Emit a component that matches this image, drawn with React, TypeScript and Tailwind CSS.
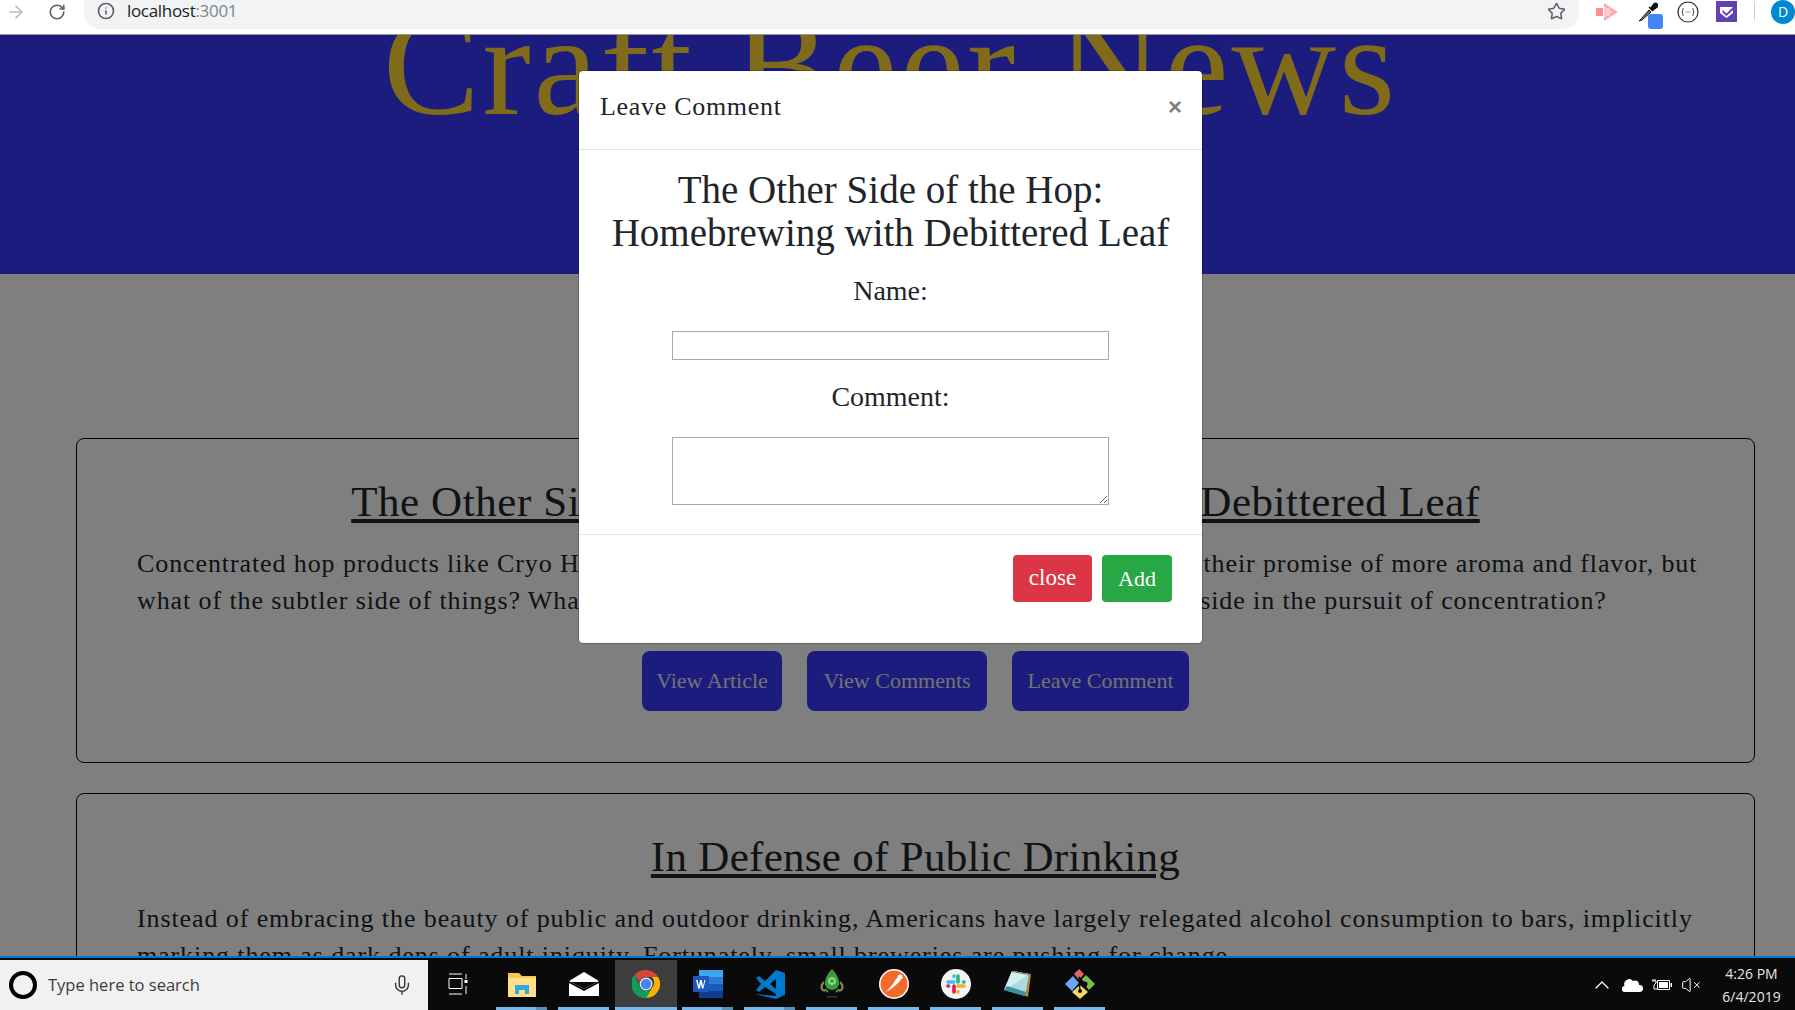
import { ArrowRight, RotateCw, Info, Star, Mic, ChevronUp, VolumeX } from "lucide-react";

const underlineCells = [
  { key: "explorer", icon: <Explorer />, split: true },
  { key: "mail", icon: <MailIcon />, split: false },
  { key: "chrome", icon: <ChromeIcon />, split: false, active: true },
  { key: "word", icon: <WordIcon />, split: true },
  { key: "vscode", icon: <VsCodeIcon />, split: true },
  { key: "rocket", icon: <RocketIcon />, split: false },
  { key: "postman", icon: <PostmanIcon />, split: false },
  { key: "slack", icon: <SlackIcon />, split: false },
  { key: "notepad", icon: <NotepadIcon />, split: false },
  { key: "kraken", icon: <DiamondIcon />, split: false },
];

function Explorer() {
  return (
    <svg width="28" height="26" viewBox="0 0 28 26">
      <path d="M0 2h11l3 3h14v21H0z" fill="#f5c94f" />
      <rect x="0" y="7" width="28" height="19" fill="#ffe08a" />
      <path d="M7 14h14v9h-4v-4h-6v4H7z" fill="#2fa9e0" />
    </svg>
  );
}

function MailIcon() {
  return (
    <svg width="30" height="24" viewBox="0 0 30 24">
      <path d="M0 9 15 0l15 9-15 8z" fill="#fff" />
      <path d="M0 11v13h30V11L15 19z" fill="#fff" />
      <path d="M2 10h26l-13 7z" fill="#0a0a0a" />
    </svg>
  );
}

function ChromeIcon() {
  return (
    <svg width="28" height="28" viewBox="0 0 48 48">
      <path d="M24 0a24 24 0 0 1 20.8 12H24a12 12 0 0 0-11.3 8L5 7.700A24 24 0 0 1 24 0z" fill="#db4437" />
      <path d="M44.800 12A24 24 0 0 1 24 48l10.400-18a12 12 0 0 0-.6-18z" fill="#f4b400" />
      <path d="M5 7.700 13.600 30a12 12 0 0 0 20.800 0L24 48A24 24 0 0 1 5 7.700z" fill="#0f9d58" />
      <circle cx="24" cy="24" r="11" fill="#f1f3f4" />
      <circle cx="24" cy="24" r="9" fill="#4285f4" />
    </svg>
  );
}

function WordIcon() {
  return (
    <svg width="30" height="28" viewBox="0 0 30 28">
      <rect x="6" y="0" width="24" height="7" fill="#41a5ee" />
      <rect x="6" y="7" width="24" height="7" fill="#2b7cd3" />
      <rect x="6" y="14" width="24" height="7" fill="#185abd" />
      <rect x="6" y="21" width="24" height="7" fill="#103f91" />
      <rect x="0" y="6" width="16" height="16" rx="1" fill="#185abd" />
      <path d="M3 10h1.600l1.200 6 1.400-6h1.500l1.400 6 1.200-6H12.400l-2 8.500H8.900L7.900 13.500l-1 5H5.200z" fill="#fff" />
    </svg>
  );
}

function VsCodeIcon() {
  return (
    <svg width="30" height="30" viewBox="0 0 30 30">
      <path d="M21 1 10 12 4 7 1 9 6 15 1 21 4 23 10 18 21 25zM21 10l-6 5 6 5z" fill="#0179cb" fillRule="evenodd" />
      <path d="M21 1l9 3v22l-9 4z" fill="#0179cb" />
      <path d="M0 25l21 2v3z" fill="#0179cb" />
    </svg>
  );
}

function RocketIcon() {
  return (
    <svg width="24" height="30" viewBox="0 0 24 30">
      <path d="M12 0c4 4 7 9 7 14 0 4-3 7-7 7s-7-3-7-7c0-5 3-10 7-14z" fill="#3d9b3d" />
      <circle cx="12" cy="12" r="4" fill="#8fd08f" />
      <circle cx="12" cy="12" r="1.800" fill="#3d9b3d" />
      <path d="M4 13c-4 4-3 8 1 9M20 13c4 4 3 8-1 9" stroke="#8a8d63" strokeWidth="2" fill="none" />
      <path d="M5 20l3 3M19 20l-3 3" stroke="#3d9b3d" strokeWidth="2" />
      <rect x="7" y="27" width="10" height="1.500" fill="#333" />
    </svg>
  );
}

function PostmanIcon() {
  return (
    <svg width="30" height="30" viewBox="0 0 30 30">
      <circle cx="15" cy="15" r="15" fill="#fff" />
      <circle cx="15" cy="15" r="13.500" fill="#f36b2a" />
      <path d="M7 23l7-8 3-5 3-2 2 1-1 3-3 3-6 5z" fill="#fff" />
      <circle cx="21" cy="8" r="2.500" fill="#fff" />
    </svg>
  );
}

function SlackIcon() {
  return (
    <svg width="30" height="30" viewBox="0 0 30 30">
      <circle cx="15" cy="15" r="15" fill="#f4f4f4" />
      <g strokeWidth="3.600" strokeLinecap="round">
        <path d="M7 13h6M13 7v0.500" stroke="#36c5f0" />
        <path d="M17 7v6M23 13h-0.500" stroke="#2eb67d" />
        <path d="M23 17h-6M17 23v-0.500" stroke="#ecb22e" />
        <path d="M13 23v-6M7 17h0.500" stroke="#e01e5a" />
      </g>
    </svg>
  );
}

function NotepadIcon() {
  return (
    <svg width="28" height="28" viewBox="0 0 28 28">
      <path d="M9 1 27 4 24 27 20 25z" fill="#b08a3c" />
      <path d="M8 1 25 4 21 26 0 20z" fill="#a9dbe0" />
      <path d="M8 1 25 4 14 12 0 20z" fill="#d4eef0" />
      <path d="M0 20 21 26 22 22 3 16z" fill="#3c8f9c" />
      <path d="M8 1 25 4 25 5 8 2z" fill="#666" />
    </svg>
  );
}

function DiamondIcon() {
  return (
    <svg width="30" height="30" viewBox="0 0 30 30">
      <path d="M9 5 14 0l5 5-5 6z" fill="#e2646a" />
      <path d="M0 15l8-8 6 7-7 8z" fill="#6aa7f5" />
      <path d="M16 11l5-5 9 9-6 6z" fill="#7fbb50" />
      <path d="M7 23l8-7 8 7-8 7z" fill="#f3d669" />
      <circle cx="20" cy="15" r="2.500" fill="#0a0a0a" />
      <circle cx="15" cy="22" r="2" fill="#0a0a0a" />
      <path d="M14 8l1 14M14 8l6 7" stroke="#0a0a0a" strokeWidth="1.300" />
    </svg>
  );
}

function ArticleCard(props: { title: string; titleClass: string; lines: string[]; buttons?: boolean }) {
  return (
    <div className="rounded-lg border border-black pt-[39px] pb-[51px] px-[60px]">
      <h2 className={`${props.titleClass} text-center text-[43px] leading-[48px] text-[#212529] underline whitespace-nowrap`}>
        {props.title}
      </h2>
      <div className="mt-[19px] text-[26px] leading-[37px] text-[#212529] tracking-[0.9px]">
        {props.lines.map((line) => (
          <p key={line} className="whitespace-nowrap">{line}</p>
        ))}
      </div>
      {props.buttons && (
        <div className="mt-[32px] flex justify-center gap-[25px]">
          <PageButton width="w-[140px]">View Article</PageButton>
          <PageButton width="w-[180px]">View Comments</PageButton>
          <PageButton width="w-[177px]">Leave Comment</PageButton>
        </div>
      )}
    </div>
  );
}

function PageButton(props: { children: string; width: string }) {
  return (
    <button className={`${props.width} h-[60px] pb-[2px] rounded-lg bg-[#3639fb] text-[22px] text-[#e4e4e4]`}>
      {props.children}
    </button>
  );
}

export default function App() {
  return (
    <div className="h-[1010px] w-[1795px] flex flex-col overflow-hidden bg-white font-['Liberation_Serif',serif]">
      {/* browser bar */}
      <div className="h-[35px] shrink-0 flex items-start border-b border-[#9a9a9a] bg-white font-['Open_Sans',sans-serif]">
        <div className="w-[84px] h-[24px] flex items-center">
          <ArrowRight size={20} className="ml-[6px] text-[#bdbdbd]" strokeWidth={2} />
          <RotateCw size={18} className="ml-[22px] text-[#5f6368]" strokeWidth={2.2} />
        </div>
        <div className="w-[1497px] h-[29px] bg-[#f1f3f4] rounded-br-[16px] rounded-bl-[16px] flex items-center justify-between pl-[13px] pr-[13px]">
          <div className="flex items-center -mt-[7px]">
            <Info size={18} className="text-[#5f6368]" strokeWidth={2.2} />
            <span className="ml-[12px] text-[17px] tracking-[-0.3px] text-[#202124]">
              localhost<span className="text-[#80868b]">:3001</span>
            </span>
          </div>
          <Star size={19} className="-mt-[6px] text-[#5f6368]" strokeWidth={2} />
        </div>
        <div className="flex-1 h-[34px] flex items-start relative">
          {/* extensions */}
          <svg width="22" height="18" viewBox="0 0 22 18" className="ml-[17px] mt-[3px]">
            <path d="M0 5h7v8H0z" fill="#ff8f94" />
            <path d="M8 0l14 9-14 9v-4l7-5-7-5z" fill="#ffaaae" />
            <path d="M8 5h5l3 4-3 4H8z" fill="#ffc9cb" />
          </svg>
          <div className="relative ml-[20px] mt-[2px] w-[28px] h-[30px]">
            <svg width="20" height="20" viewBox="0 0 20 20">
              <path d="M1 19 3 17 11 8 13 10 4 18z" fill="#3b8a5b" stroke="#222" strokeWidth="1" />
              <path d="M11 5 15 9M13 6l3-4a2 2 0 0 1 3 3l-4 3z" fill="#111" stroke="#111" strokeWidth="1.500" />
            </svg>
            <div className="absolute left-[10px] top-[12px] w-[15px] h-[15px] rounded-[3px] bg-[#4285f4]" />
          </div>
          <svg width="22" height="22" viewBox="0 0 22 22" className="ml-[11px] mt-[1px]">
            <circle cx="11" cy="11" r="10" fill="none" stroke="#333" strokeWidth="1.200" />
            <path d="M6.500 7c-1 0 0 3-1.500 4 1.500 1 .5 4 1.500 4M15.500 7c1 0 0 3 1.500 4-1.500 1-.5 4-1.500 4" stroke="#333" fill="none" />
            <circle cx="9" cy="11" r=".6" fill="#333" />
            <circle cx="11" cy="11" r=".6" fill="#333" />
            <circle cx="13" cy="11" r=".6" fill="#333" />
          </svg>
          <svg width="21" height="21" viewBox="0 0 21 21" className="ml-[17px] mt-[1px]">
            <rect width="21" height="21" fill="#6a3fb5" />
            <rect x="10" width="11" height="21" fill="#5b43ad" />
            <path d="M4 6h13v6l-6.500 5L4 12z" fill="#fff" />
            <path d="M6.500 9l4 3.500L17 6v3l-6.500 6-4-3.500z" fill="#6a3fb5" />
          </svg>
          <div className="ml-[17px] mt-[1px] w-[1px] h-[20px] bg-[#cfcfcf]" />
          <div className="ml-[16px] w-[24px] h-[24px] shrink-0 rounded-full bg-[#0288d1] text-white text-[14px] leading-[24px] text-center">
            D
          </div>
        </div>
      </div>

      {/* page */}
      <div className="relative flex-1 overflow-hidden">
        <header className="h-[239px] bg-[#3639fb] overflow-hidden">
          <h1 className="-mt-[45px] text-center text-[145px] leading-[150px] text-[#fed634] pr-[14px] whitespace-nowrap tracking-[2.7px]">
            Craft Beer News
          </h1>
        </header>
        <main className="mt-[164px] ml-[76px] mr-[40px] flex flex-col gap-[30px]">
          <ArticleCard
            title="The Other Side of the Hop: Homebrewing with Debittered Leaf"
            titleClass="tracking-[0.57px]"
            lines={[
              "Concentrated hop products like Cryo Hops and lupulin powder have wooed brewers over with their promise of more aroma and flavor, but",
              "what of the subtler side of things? What might be gained from the humble hop leaf often left aside in the pursuit of concentration?",
            ]}
            buttons
          />
          <ArticleCard
            title="In Defense of Public Drinking"
            titleClass="tracking-[0.3px]"
            lines={[
              "Instead of embracing the beauty of public and outdoor drinking, Americans have largely relegated alcohol consumption to bars, implicitly",
              "marking them as dark dens of adult iniquity. Fortunately, small breweries are pushing for change.",
            ]}
          />
        </main>

        {/* modal */}
        <div className="absolute inset-0 bg-black/50" />
        <div className="absolute left-[578px] top-[35px] w-[625px] rounded-[5px] bg-white border border-black/20 bg-clip-padding text-[#212529]">
          <div className="h-[79px] flex items-center justify-between pl-[21px] pr-[20px] pb-[7px] border-b border-[#dee2e6]">
            <span className="text-[26px] leading-[32px] tracking-[0.7px]">Leave Comment</span>
            <span className="text-[24px] leading-[32px] font-bold text-[#7f7f7f] font-['Liberation_Sans',sans-serif]">×</span>
          </div>
          <div className="flex flex-col items-center h-[385px] border-b border-[#dee2e6]">
            <h3 className="mt-[18px] text-center text-[39px] leading-[43px] whitespace-nowrap">
              The Other Side of the Hop:
              <br />
              Homebrewing with Debittered Leaf
            </h3>
            <label className="mt-[21px] text-[28px] leading-[32px]">Name:</label>
            <input className="mt-[24px] w-[437px] h-[29px] bg-white border border-[#a9a9a9]" />
            <label className="mt-[21px] text-[28px] leading-[32px]">Comment:</label>
            <textarea className="mt-[24px] w-[437px] h-[68px] bg-white border border-[#a9a9a9]" />
          </div>
          <div className="h-[108px] flex items-start justify-end gap-[10px] pt-[20px] pr-[30px]">
            <button className="w-[79px] h-[47px] rounded-[4px] bg-[#dc3545] text-white text-[23px]">close</button>
            <button className="w-[70px] h-[47px] rounded-[4px] bg-[#28a745] text-white text-[22px]">Add</button>
          </div>
        </div>
      </div>

      {/* windows taskbar */}
      <div className="h-[54px] shrink-0 border-t-[2px] border-[#0078d7] bg-[#0a0a0a] font-['Open_Sans',sans-serif]">
        <div className="mt-[2px] h-[50px] flex items-stretch">
          <div className="w-[428px] bg-[#f1f1f1] flex items-center pl-[9px] pr-[15px]">
            <div className="w-[28px] h-[28px] rounded-full border-[4px] border-black bg-transparent" />
            <span className="ml-[11px] flex-1 text-[16.5px] text-[#3c3c3c]">Type here to search</span>
            <Mic size={22} className="text-[#333]" strokeWidth={1.5} />
          </div>
          <div className="flex pl-[1px]">
            <div className="w-[62px] flex items-center justify-center pb-[2px] pr-[4px]">
              <svg width="20" height="22" viewBox="0 0 20 22" fill="none" stroke="#fff" strokeWidth="1">
                <path d="M1 1h13M1 5.500h13v10H1zM1 21h13M18 1v5M18 9.500v.5M18 13v8" />
                <rect x="16.500" y="7" width="3" height="3" fill="#fff" stroke="none" />
              </svg>
            </div>
            {underlineCells.map((cell) => (
              <div
                key={cell.key}
                className={
                  cell.active
                    ? "relative w-[62px] flex items-center justify-center pb-[2px] bg-[#3d3d3d]"
                    : "relative w-[62px] flex items-center justify-center pb-[2px]"
                }
              >
                {cell.icon}
                <div
                  className={
                    cell.active
                      ? "absolute bottom-0 left-0 right-0 h-[3px] bg-[#76b9ed]"
                      : "absolute bottom-0 left-[5px] right-[6px] h-[3px] bg-[#76b9ed]"
                  }
                />
                {cell.split && (
                  <div className="absolute bottom-0 right-[6px] w-[11px] h-[3px] bg-[#5a8fb8]" />
                )}
              </div>
            ))}
          </div>
          <div className="ml-auto flex items-center pr-[3px] text-white">
            <ChevronUp size={24} strokeWidth={1.3} className="mr-[8px]" />
            <svg width="21" height="14" viewBox="0 0 21 14" className="mr-[9px]">
              <path d="M3 14a3 3 0 0 1-.5-6A5 5 0 0 1 11 3a4 4 0 0 1 6 4 3.500 3.500 0 0 1 1 7z" fill="#fff" />
            </svg>
            <svg width="20" height="12" viewBox="0 0 20 12" className="mr-[9px]">
              <path d="M5.500 1.500h12v9h-12z" fill="none" stroke="#fff" />
              <rect x="7" y="3" width="9" height="6" fill="#fff" />
              <rect x="18.500" y="4" width="1.500" height="4" fill="#fff" />
              <path d="M1 0v2M3 0v2M0 2h4v2L2 6v4h3" stroke="#fff" fill="none" strokeWidth="1" />
            </svg>
            <VolumeX size={20} strokeWidth={1.2} />
            <div className="w-[91px] pl-[10px] text-center text-[14px] leading-[23px] text-[#e6e6e6]">
              <div>4:26 PM</div>
              <div>6/4/2019</div>
            </div>
          </div>
        </div>
      </div>
    </div>
  );
}
